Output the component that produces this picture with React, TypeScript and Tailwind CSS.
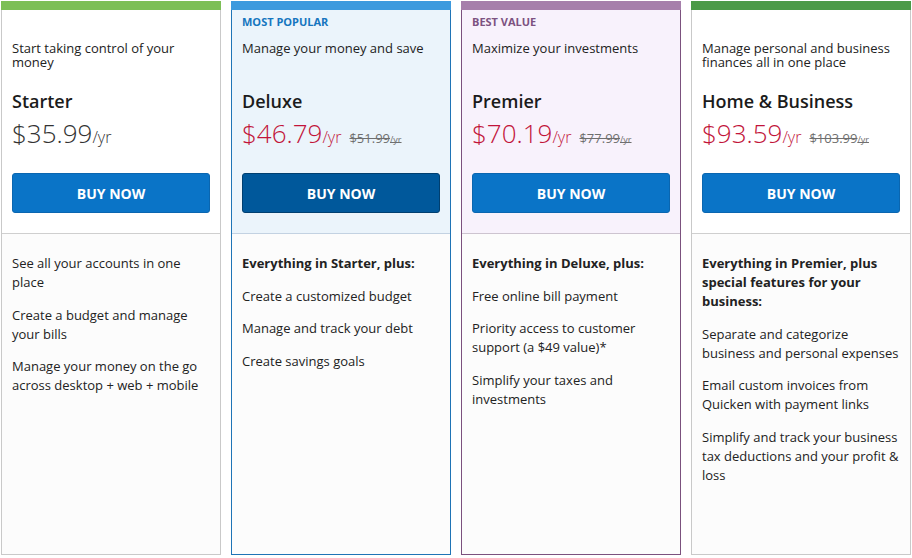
type Plan = {
  bar: string;
  border: string;
  topBg: string;
  divider: string;
  label?: string;
  labelColor?: string;
  desc: string;
  name: string;
  price: string;
  old?: string;
  priceColor: string;
  button: string;
  lead?: string;
  features: string[];
};

const plans: Plan[] = [
  {
    bar: "bg-[#7dbf57]",
    border: "border-[#c9c9c9]",
    topBg: "bg-white",
    divider: "border-[#cfcfcf]",
    desc: "Start taking control of your money",
    name: "Starter",
    price: "$35.99",
    priceColor: "text-[#333333]",
    button: "bg-[#0a74c7] border-[#0a66b0]",
    features: [
      "See all your accounts in one place",
      "Create a budget and manage your bills",
      "Manage your money on the go across desktop + web + mobile",
    ],
  },
  {
    bar: "bg-[#3d9ade]",
    border: "border-[#1f74b6]",
    topBg: "bg-[#ebf4fb]",
    divider: "border-[#c3d2e2]",
    label: "MOST POPULAR",
    labelColor: "text-[#1676bf]",
    desc: "Manage your money and save",
    name: "Deluxe",
    price: "$46.79",
    old: "$51.99",
    priceColor: "text-[#c2143a]",
    button: "bg-[#00589b] border-[#003f70]",
    lead: "Everything in Starter, plus:",
    features: [
      "Create a customized budget",
      "Manage and track your debt",
      "Create savings goals",
    ],
  },
  {
    bar: "bg-[#a67fab]",
    border: "border-[#7b517e]",
    topBg: "bg-[#f8f2fc]",
    divider: "border-[#cdc4d0]",
    label: "BEST VALUE",
    labelColor: "text-[#7d5281]",
    desc: "Maximize your investments",
    name: "Premier",
    price: "$70.19",
    old: "$77.99",
    priceColor: "text-[#c2143a]",
    button: "bg-[#0a74c7] border-[#0a66b0]",
    lead: "Everything in Deluxe, plus:",
    features: [
      "Free online bill payment",
      "Priority access to customer support (a $49 value)*",
      "Simplify your taxes and investments",
    ],
  },
  {
    bar: "bg-[#4c9a48]",
    border: "border-[#c9c9c9]",
    topBg: "bg-white",
    divider: "border-[#cfcfcf]",
    desc: "Manage personal and business finances all in one place",
    name: "Home & Business",
    price: "$93.59",
    old: "$103.99",
    priceColor: "text-[#c2143a]",
    button: "bg-[#0a74c7] border-[#0a66b0]",
    lead: "Everything in Premier, plus special features for your business:",
    features: [
      "Separate and categorize business and personal expenses",
      "Email custom invoices from Quicken with payment links",
      "Simplify and track your business tax deductions and your profit & loss",
    ],
  },
];

const PlanCard = ({ plan }: { plan: Plan }) => {
  return (
    <div className="flex w-[220px] flex-col">
      <div className={`h-[9px] w-full ${plan.bar}`} />
      <div className={`flex flex-1 flex-col border-x border-b ${plan.border}`}>
        <div className={`border-b px-[10px] pb-[20px] ${plan.topBg} ${plan.divider}`}>
          <p className={`mt-[5px] h-[14px] text-[11px] font-bold leading-[14px] ${plan.labelColor ?? ""}`}>
            {plan.label}
          </p>
          <p className="mt-[12px] h-[28px] text-[13px] leading-[14px] text-[#222]">{plan.desc}</p>
          <p className="mt-[20px] text-[18px] font-semibold leading-[24px] text-[#1b1b1b]">{plan.name}</p>
          <div className={`mt-[4px] flex h-[32px] items-baseline ${plan.priceColor}`}>
            <span className="text-[26px] font-light leading-[32px]">{plan.price}</span>
            <span className="text-[16px] font-light">/yr</span>
            {plan.old && (
              <span className="ml-[8px] text-[13px] text-[#6f6f6f] line-through">
                {plan.old}
                <span className="text-[9px]">/yr</span>
              </span>
            )}
          </div>
          <button
            className={`mt-[24px] h-[40px] w-full rounded-[3px] border text-[14px] font-bold text-white ${plan.button}`}
          >
            BUY NOW
          </button>
        </div>
        <div className="flex flex-1 flex-col gap-[13.5px] bg-[#fcfcfc] px-[10px] pt-[20px] text-[13px] leading-[19px] text-[#222]">
          {plan.lead && <p className="font-bold">{plan.lead}</p>}
          {plan.features.map((f) => (
            <p key={f}>{f}</p>
          ))}
        </div>
      </div>
    </div>
  );
};

export default function App() {
  return (
    <div className="flex h-[558px] w-[912px] gap-[10px] bg-white pl-[1px] pt-[1px] pb-[3px] font-['Open_Sans',sans-serif]">
      {plans.map((p) => (
        <PlanCard key={p.name} plan={p} />
      ))}
    </div>
  );
}
